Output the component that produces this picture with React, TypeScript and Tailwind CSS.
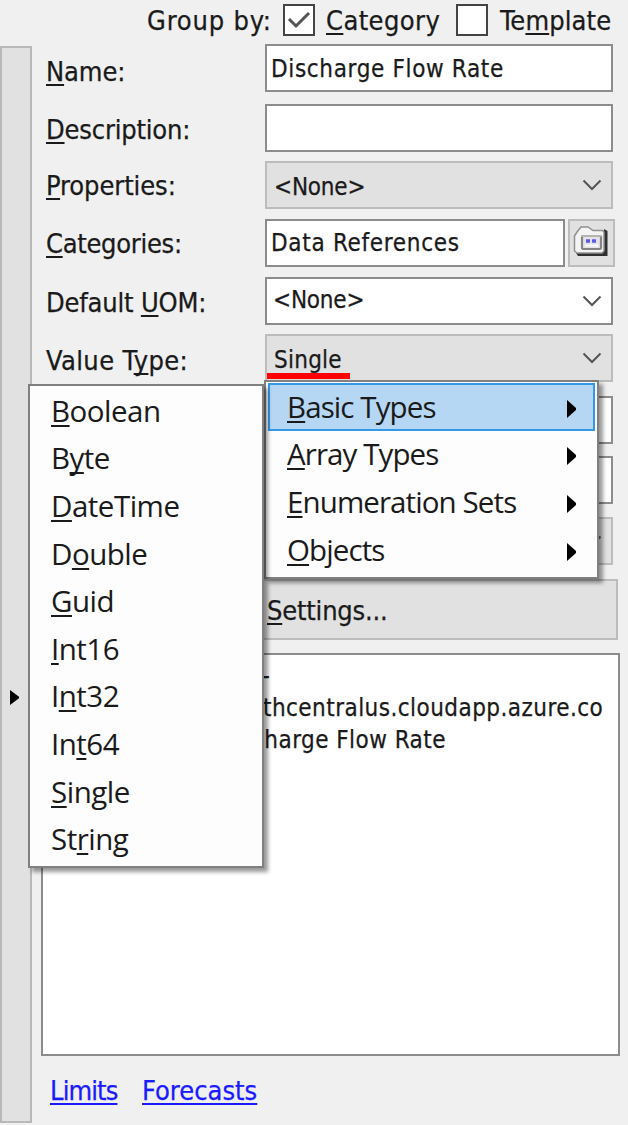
import React from "react";

const LABEL = "text-[27px] leading-[36px] whitespace-pre font-['DejaVu_Sans_Condensed','DejaVu_Sans',sans-serif] font-stretch-condensed [-webkit-text-stroke:0.25px_currentColor]";
const VALUE = "text-[24px] leading-[32px] whitespace-pre font-['DejaVu_Sans_Condensed','DejaVu_Sans',sans-serif] font-stretch-condensed [-webkit-text-stroke:0.25px_currentColor]";
const MENU = "text-[29.5px] leading-[40px] whitespace-pre";

/** Text with one mnemonic letter, marked by a preceding "&". */
function Mnemonic({ text }: { text: string }) {
  const i = text.indexOf("&");
  if (i < 0) return <>{text}</>;
  return (
    <>
      {text.slice(0, i)}
      <span className="underline decoration-2 underline-offset-[3px] [text-decoration-skip-ink:none]">{text[i + 1]}</span>
      {text.slice(i + 2)}
    </>
  );
}

function Chevron() {
  return (
    <svg className="mr-[9px] h-[12px] w-[20px] shrink-0" viewBox="0 0 20 12" fill="none" stroke="#555" strokeWidth="2">
      <path d="M1.5 1.5 L10 10 L18.5 1.5" />
    </svg>
  );
}

function Arrow({ className = "" }: { className?: string }) {
  return (
    <svg className={"shrink-0 " + className} viewBox="0 0 9 18" preserveAspectRatio="none">
      <path d="M0 0 L9 8 V10 L0 18 Z" fill="#000" />
    </svg>
  );
}

function Row({ label, className, labelClass = "", children }: { label: string; className: string; labelClass?: string; children?: React.ReactNode }) {
  return (
    <div className={"flex h-[48px] items-start " + className}>
      <div className={"w-[219px] shrink-0 " + LABEL + " " + labelClass}>
        <Mnemonic text={label} />
      </div>
      {children}
    </div>
  );
}

const box = "flex h-[48px] w-[348px] items-start border-2 border-[#8c8c8c] bg-white";
const combo = "flex h-[48px] w-[348px] items-center justify-between border-2 border-[#bcbcbc] bg-[#e1e1e1]";

const types = ["&Boolean", "B&yte", "&DateTime", "D&ouble", "&Guid", "&Int16", "I&nt32", "In&t64", "&Single", "St&ring"];

const groups = ["&Basic Types", "&Array Types", "&Enumeration Sets", "&Objects"];

export default function App() {
  return (
    <div className="relative h-[1125px] w-[628px] overflow-hidden bg-[#f0f0f0] font-['Open_Sans',sans-serif] text-[#1a1a1a]">
      <div className="flex h-[44px] items-start pl-[147px] pt-[3px]">
        <span className={"w-[136px] tracking-[0.8px] " + LABEL}>Group by:</span>
        <span className="mt-[1px] flex h-[32px] w-[32px] items-center justify-center border-2 border-[#444] bg-white">
          <svg className="h-[18px] w-[24px]" viewBox="0 0 24 18" fill="none" stroke="#555" strokeWidth="3">
            <path d="M2 8 L9 15 L22 2" />
          </svg>
        </span>
        <span className={"ml-[11px] w-[130px] tracking-[0.4px] " + LABEL}><Mnemonic text="&Category" /></span>
        <span className="mt-[1px] h-[32px] w-[32px] border-2 border-[#444] bg-white" />
        <span className={"ml-[12px] tracking-[0.1px] " + LABEL}><Mnemonic text="Te&mplate" /></span>
      </div>

      <div className="flex">
        <div className="mt-[2px] flex h-[1077px] w-[32px] items-center border-2 border-[#b9b9b9] bg-[#e1e1e1]">
          <Arrow className="mt-[226px] ml-[8px] h-[15px] w-[9px]" />
        </div>

        <div className="flex w-[596px] flex-col pl-[9px]">
          <div className="flex flex-col pl-[5px]">
            <Row label="&Name:" className="" labelClass="pt-[10px] tracking-[-0.1px]">
              <div className={box + " pl-[4px] pt-[7px]"}><span className={"tracking-[0.65px] " + VALUE}>Discharge Flow Rate</span></div>
            </Row>
            <Row label="&Description:" className="mt-[12px]" labelClass="pt-[8px] tracking-[-0.2px]">
              <div className={box} />
            </Row>
            <Row label="&Properties:" className="mt-[9px]" labelClass="pt-[7px] tracking-[-0.1px]">
              <div className={combo + " pl-[7px]"}><span className={"pt-[4px] tracking-[-0.2px] " + VALUE}>&lt;None&gt;</span><Chevron /></div>
            </Row>
            <Row label="&Categories:" className="mt-[10px]" labelClass="pt-[7px] tracking-[-0.3px]">
              <div className="flex h-[48px] w-[300px] shrink-0 items-start border-2 border-[#8c8c8c] bg-white pl-[4px] pt-[6px]"><span className={"tracking-[0.7px] " + VALUE}>Data References</span></div>
              <div className="ml-[3px] flex h-[48px] w-[47px] shrink-0 items-start border-2 border-[#bcbcbc] bg-[#e1e1e1] pl-[3px] pt-[4px]">
                <svg className="h-[34px] w-[36px]" viewBox="0 0 36 34">
                  <path d="M3 28 L5 31 H34.5 V6 L31 4 V27 Z" fill="#303030" />
                  <path d="M1.5 11 L4 7 L8 2 H15 L20 5.5 H29.5 L31 7 V26 L29 28 H4 L1.5 26 Z" fill="#f4f4f4" stroke="#909090" strokeWidth="1.5" />
                  <rect x="9" y="11" width="19" height="13" rx="1" fill="#e4e4e8" stroke="#858585" strokeWidth="2.2" />
                  <path d="M8 11 H28" stroke="#b4b4b4" strokeWidth="2" />
                  <path d="M13 16 h4 M19 16 h4" stroke="#5c5ce6" strokeWidth="3.5" />
                  <path d="M12 20.5 H25" stroke="#fff" strokeWidth="2" />
                </svg>
              </div>
            </Row>
            <Row label="Default &UOM:" className="mt-[10px]" labelClass="pt-[8px] tracking-[-0.2px]">
              <div className={box + " justify-between pl-[6px]"}>
                <span className={"pt-[5px] tracking-[-0.2px] " + VALUE}>&lt;None&gt;</span>
                <span className="flex h-[44px] items-center"><Chevron /></span>
              </div>
            </Row>
            <Row label="Value T&ype:" className="mt-[9px]" labelClass="pt-[9px] tracking-[0.4px]">
              <div className={combo + " pl-[7px]"}><span className={"pt-[4px] tracking-[0.25px] " + VALUE}>Single</span><Chevron /></div>
            </Row>
            <Row label="" className="mt-[14px]"><div className={box} /></Row>
            <Row label="" className="mt-[12px]"><div className={box} /></Row>
            <Row label="" className="mt-[13px]"><div className={combo + " justify-end"}><Chevron /></div></Row>
          </div>

          <div className="mt-[14px] flex h-[61px] w-[577px] items-start border-2 border-[#bcbcbc] bg-[#e1e1e1] pt-[12px] pl-[224px]">
            <span className={"tracking-[-0.2px] " + LABEL}><Mnemonic text="&Settings..." /></span>
          </div>
          <div className={"mt-[13px] flex h-[403px] w-[579px] flex-col border-2 border-[#8c8c8c] bg-white pt-[5px] pl-[209px] tracking-[0.45px] " + VALUE}>
            <span className="pl-[10px]">-</span>
            <span className="pl-[11px]">thcentralus.cloudapp.azure.co</span>
            <span>charge Flow Rate</span>
          </div>
          <div className={"mt-[17px] flex pl-[9px] text-[#1a1aff] " + LABEL}>
            <span className="w-[92px] tracking-[-0.9px]"><span className="underline decoration-2 underline-offset-[3px]">Limits</span></span>
            <span className="underline decoration-2 underline-offset-[3px]">Forecasts</span>
          </div>
        </div>
      </div>

      <div className="absolute top-[373px] left-[267px] h-[6px] w-[83px] bg-[#fe0000]" />

      <div className="absolute top-[380px] left-[264px] flex h-[199px] w-[335px] flex-col border-2 border-[#808080] bg-[#fdfdfd] pl-[2px] pt-[1px] shadow-[4px_4px_4px_rgba(0,0,0,0.4)]">
        {groups.map((g, i) => (
          <div key={g} className={"flex h-[47.6px] w-[327px] items-center justify-between border-2 pr-[17px] pl-[17px] tracking-[-0.9px] " + (i === 0 ? "border-[#3399e5] bg-[#b5d7f3]" : "border-transparent")}>
            <span className={MENU}><Mnemonic text={g} /></span>
            <Arrow className="mt-[4px] h-[18px] w-[9px]" />
          </div>
        ))}
      </div>

      <div className="absolute top-[384px] left-[28px] flex h-[484px] w-[236px] flex-col border-2 border-[#808080] bg-[#fdfdfd] pt-[1px] pl-[21px] shadow-[4px_4px_4px_rgba(0,0,0,0.4)]">
        {types.map((t) => (
          <div key={t} className={"flex h-[47.6px] items-center tracking-[-0.5px] " + MENU}>
            <span><Mnemonic text={t} /></span>
          </div>
        ))}
      </div>
    </div>
  );
}
